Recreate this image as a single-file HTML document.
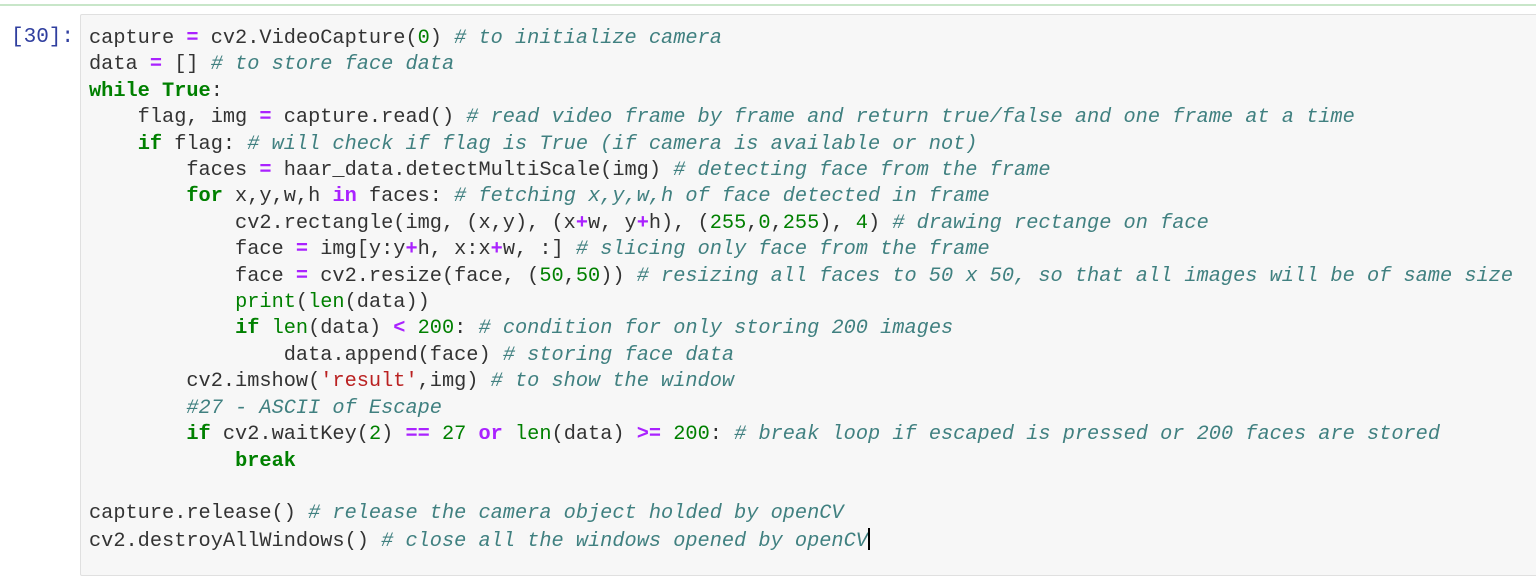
<!DOCTYPE html>
<html><head><meta charset="utf-8"><style>
body{margin:0;width:1536px;height:562px;background:#fff;overflow:hidden;position:relative;font-family:"Liberation Mono",monospace}
.top{position:absolute;left:0;top:4px;width:1536px;height:2px;background:#c8e6c9}
.prompt{position:absolute;left:11px;top:25px;font-size:21px;line-height:26.4px;color:#303f9f}
.cell{position:absolute;left:80px;top:14px;width:1470px;height:560px;background:#f7f7f7;border:1px solid #e0e0e0;border-radius:2px}
pre{position:absolute;left:89px;top:26px;margin:0;font-family:"Liberation Mono",monospace;font-size:20.3px;line-height:26.4px;color:#333}
.k{color:#008000;font-weight:bold}.o{color:#aa22ff;font-weight:bold}.c{color:#408080;font-style:italic}.n{color:#008000}.s{color:#ba2121}.b{color:#008000}
.cur{display:inline-block;width:2px;height:22px;background:#000;vertical-align:-4px}
</style></head><body>
<div class="top"></div>
<div class="prompt">[30]:</div>
<div class="cell"></div>
<pre>capture <span class="o">=</span> cv2.VideoCapture(<span class="n">0</span>) <span class="c"># to initialize camera</span>
data <span class="o">=</span> [] <span class="c"># to store face data</span>
<span class="k">while</span> <span class="k">True</span>:
    flag, img <span class="o">=</span> capture.read() <span class="c"># read video frame by frame and return true/false and one frame at a time</span>
    <span class="k">if</span> flag: <span class="c"># will check if flag is True (if camera is available or not)</span>
        faces <span class="o">=</span> haar_data.detectMultiScale(img) <span class="c"># detecting face from the frame</span>
        <span class="k">for</span> x,y,w,h <span class="o">in</span> faces: <span class="c"># fetching x,y,w,h of face detected in frame</span>
            cv2.rectangle(img, (x,y), (x<span class="o">+</span>w, y<span class="o">+</span>h), (<span class="n">255</span>,<span class="n">0</span>,<span class="n">255</span>), <span class="n">4</span>) <span class="c"># drawing rectange on face</span>
            face <span class="o">=</span> img[y:y<span class="o">+</span>h, x:x<span class="o">+</span>w, :] <span class="c"># slicing only face from the frame</span>
            face <span class="o">=</span> cv2.resize(face, (<span class="n">50</span>,<span class="n">50</span>)) <span class="c"># resizing all faces to 50 x 50, so that all images will be of same size</span>
            <span class="b">print</span>(<span class="b">len</span>(data))
            <span class="k">if</span> <span class="b">len</span>(data) <span class="o">&lt;</span> <span class="n">200</span>: <span class="c"># condition for only storing 200 images</span>
                data.append(face) <span class="c"># storing face data</span>
        cv2.imshow(<span class="s">'result'</span>,img) <span class="c"># to show the window</span>
        <span class="c">#27 - ASCII of Escape</span>
        <span class="k">if</span> cv2.waitKey(<span class="n">2</span>) <span class="o">==</span> <span class="n">27</span> <span class="o">or</span> <span class="b">len</span>(data) <span class="o">&gt;=</span> <span class="n">200</span>: <span class="c"># break loop if escaped is pressed or 200 faces are stored</span>
            <span class="k">break</span>

capture.release() <span class="c"># release the camera object holded by openCV</span>
cv2.destroyAllWindows() <span class="c"># close all the windows opened by openCV</span><span class="cur"></span></pre>
</body></html>
